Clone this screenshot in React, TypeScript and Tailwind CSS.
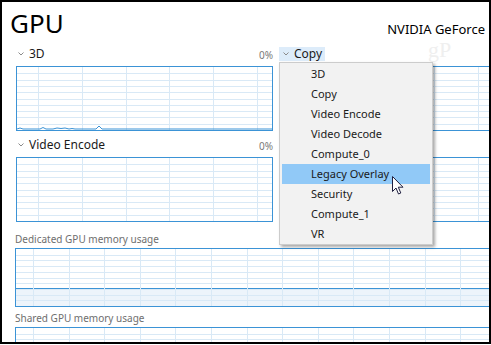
import React from "react";

const BLUE = "#3b93d6";
const GRID = "#d9e9f6";

function Chevron() {
  return (
    <svg width="6" height="4" viewBox="0 0 6 4" className="mr-[5px] shrink-0">
      <polyline points="0.5,0.5 3,3 5.5,0.5" fill="none" stroke="#8a8a8a" strokeWidth="1" />
    </svg>
  );
}

function Grid({
  w,
  h,
  colStart,
  colStep,
  rows,
  children,
}: {
  w: number;
  h: number;
  colStart: number;
  colStep: number;
  rows: number;
  children?: React.ReactNode;
}) {
  const cols: number[] = [];
  for (let x = colStart; x < w; x += colStep) cols.push(Math.round(x) + 0.5);
  const lines: number[] = [];
  for (let i = 1; i < rows; i++) lines.push(Math.round((h * i) / rows) + 0.5);
  return (
    <svg width={w} height={h} className="block">
      {children}
      {lines.map((y) => (
        <line key={"r" + y} x1="0" x2={w} y1={y} y2={y} stroke={GRID} strokeWidth="1" />
      ))}
      {cols.map((x) => (
        <line key={"c" + x} x1={x} x2={x} y1="0" y2={h} stroke={GRID} strokeWidth="1" />
      ))}
    </svg>
  );
}

function EngineGraph({ line }: { line?: boolean }) {
  return (
    <div className="w-[257px] h-[65px] border border-[#3b93d6] bg-white">
      <Grid w={255} h={63} colStart={21} colStep={43.8} rows={10} />
      {line && (
        <svg width="255" height="63" className="block -mt-[63px] relative">
          <polyline
            points="0,62 3,61 6,62 23,62 26,60.5 29,62 36,62 40,61 44,61.5 48,61 52,62 55,61.5 58,62 79,62 82,59 85,62 255,62"
            fill="none"
            stroke={BLUE}
            strokeWidth="1"
          />
        </svg>
      )}
    </div>
  );
}

const menuItems = [
  "3D",
  "Copy",
  "Video Encode",
  "Video Decode",
  "Compute_0",
  "Legacy Overlay",
  "Security",
  "Compute_1",
  "VR",
];

export default function App() {
  return (
    <div
      className="relative w-[491px] h-[344px] bg-white border-2 border-black overflow-hidden text-[#1a1a1a]"
      style={{ fontFamily: '"Noto Sans", "Open Sans", sans-serif' }}
    >
      {/* Header */}
      <div className="h-[44px] flex justify-between items-start pl-[8px] pr-[4px]">
        <div className="pt-[6px] text-[26px] leading-[30px] text-black">GPU</div>
        <div className="mt-[20px] text-[13px] leading-[14px] whitespace-nowrap text-black">
          NVIDIA GeForce
        </div>
      </div>

      {/* Watermark */}
      <div
        className="absolute left-[426px] top-[37px] text-[22px] leading-[22px] text-[#efefef] select-none"
        style={{ fontFamily: '"Liberation Serif", serif' }}
      >
        gP
      </div>

      {/* Engine graphs */}
      <div className="pl-[14px] flex gap-[8px] w-[800px]">
        <div className="w-[257px] flex flex-col">
          <div className="h-[16px] mb-[4px] flex items-center justify-between pl-[2px]">
            <div className="flex items-center text-[12px] leading-[16px]">
              <Chevron />
              3D
            </div>
            <span className="text-[10px] text-[#7a7a7a] pt-[2px]">0%</span>
          </div>
          <EngineGraph line />
          <div className="h-[16px] mt-[6px] mb-[4px] flex items-center justify-between pl-[2px]">
            <div className="flex items-center text-[12px] leading-[16px]">
              <Chevron />
              Video Encode
            </div>
            <span className="text-[10px] text-[#7a7a7a] pt-[2px]">0%</span>
          </div>
          <EngineGraph />
        </div>
        <div className="w-[257px] flex flex-col">
          <div className="h-[16px] mb-[4px] flex items-center">
            <div className="-ml-[2px] h-[14px] flex items-center pl-[4px] pr-[3px] bg-[#ddecfa] text-[12px] leading-[16px]">
              <Chevron />
              Copy
            </div>
          </div>
          <EngineGraph />
          <div className="h-[16px] mt-[6px] mb-[4px]" />
          <EngineGraph />
        </div>
      </div>

      {/* Memory graphs */}
      <div className="pl-[13px] mt-[10px]">
        <div className="h-[14px] mb-[2px] text-[10px] leading-[14px] text-[#6e6e6e]">
          Dedicated GPU memory usage
        </div>
        <div className="w-[500px] h-[59px] border border-[#3b93d6] bg-white">
          <Grid w={498} h={57} colStart={17} colStep={35.6} rows={10}>
            <rect x="0" y="39" width="498" height="18" fill="#edf4fb" />
            <line x1="0" x2="498" y1="39.5" y2="39.5" stroke={BLUE} strokeWidth="1" />
          </Grid>
        </div>
        <div className="h-[14px] mt-[4px] mb-[2px] text-[10px] leading-[14px] text-[#6e6e6e]">
          Shared GPU memory usage
        </div>
        <div className="w-[500px] h-[59px] border border-[#3b93d6] bg-white">
          <Grid w={498} h={57} colStart={17} colStep={35.6} rows={10} />
        </div>
      </div>

      {/* Dropdown menu */}
      <div className="absolute left-[277px] top-[60px] w-[154px] h-[183px] bg-[#f2f2f2] border border-[#cccccc] shadow-[2px_2px_3px_rgba(0,0,0,0.35)] pt-[1px] px-[2px]">
        {menuItems.map((item) => (
          <div
            key={item}
            className={
              "h-[20px] flex items-center pl-[29px] text-[11px] leading-[20px] text-[#1a1a1a] " +
              (item === "Legacy Overlay" ? "bg-[#91c9f7]" : "")
            }
          >
            {item}
          </div>
        ))}
      </div>

      {/* Mouse cursor */}
      <svg
        width="13"
        height="20"
        viewBox="0 0 13 20"
        className="absolute left-[390px] top-[174px]"
      >
        <path
          d="M0.5,0.5 L0.5,15.5 L4,12 L6.5,18 L8.8,17 L6.3,11.2 L11,11.2 Z"
          fill="#ffffff"
          stroke="#202040"
          strokeWidth="1"
          strokeLinejoin="round"
        />
      </svg>
    </div>
  );
}
